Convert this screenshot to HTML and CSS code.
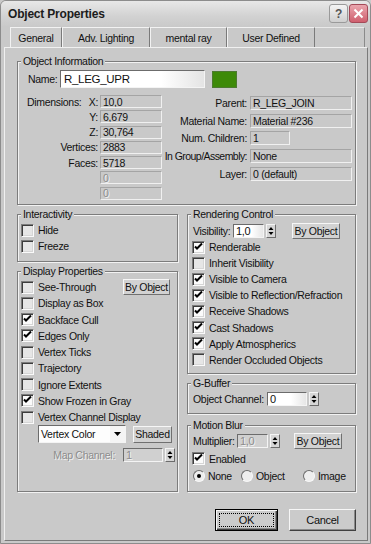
FILE: index.html
```html
<!DOCTYPE html>
<html lang="en">

<head>
    <meta charset="UTF-8">
    <meta name="viewport" content="width=device-width, initial-scale=1.0">
    <title>Object Properties</title>
    <link rel="stylesheet" href="styles.css">
</head>

<body>
    <div class="dialog">
        <div class="titlebar">
            <span class="title">Object Properties</span>
            <div class="title-buttons">
                <span class="tb-btn tb-help">?</span>
                <span class="tb-btn tb-close">
                    <svg width="11" height="11" viewBox="0 0 11 11"><path d="M1.5 1.5L9.5 9.5M9.5 1.5L1.5 9.5" stroke="#fff" stroke-width="2"/></svg>
                </span>
            </div>
        </div>

        <div class="tabs">
            <div class="tab active tab-general">General</div>
            <div class="tab tab-adv">Adv. Lighting</div>
            <div class="tab tab-mr">mental ray</div>
            <div class="tab tab-user">User Defined</div>
            <div class="tab-fill"></div>
        </div>

        <div class="page">
            <fieldset class="group obj-info">
                <legend>Object Information</legend>
                <div class="name-row">
                    <span class="name-label">Name:</span>
                    <div class="name-input">R_LEG_UPR</div>
                    <div class="swatch"></div>
                </div>
                <div class="info">
                    <div class="info-left">
                        <span class="lbl lbl-dim"><span>Dimensions:</span><span>X:</span></span><span class="field">10,0</span>
                        <span class="lbl">Y:</span><span class="field">6,679</span>
                        <span class="lbl">Z:</span><span class="field">30,764</span>
                        <span class="lbl">Vertices:</span><span class="field">2883</span>
                        <span class="lbl">Faces:</span><span class="field">5718</span>
                        <span class="lbl"></span><span class="field off">0</span>
                        <span class="lbl"></span><span class="field off">0</span>
                    </div>
                    <div class="info-right">
                        <span class="lbl">Parent:</span><span class="field">R_LEG_JOIN</span>
                        <span class="lbl">Material Name:</span><span class="field">Material #236</span>
                        <span class="lbl">Num. Children:</span><span class="field short">1</span>
                        <span class="lbl lbl-tight">In Group/Assembly:</span><span class="field">None</span>
                        <span class="lbl">Layer:</span><span class="field">0 (default)</span>
                    </div>
                </div>
            </fieldset>

            <div class="columns">
                <div class="col col-left">
                    <fieldset class="group interactivity">
                        <legend>Interactivity</legend>
                        <div class="check"><span class="box"></span>Hide</div>
                        <div class="check"><span class="box"></span>Freeze</div>
                    </fieldset>

                    <fieldset class="group display">
                        <legend>Display Properties</legend>
                        <div class="check"><span class="box"></span>See-Through<span class="btn small by-object-left">By Object</span></div>
                        <div class="check"><span class="box"></span>Display as Box</div>
                        <div class="check"><span class="box on"><svg width="11" height="11" viewBox="0 0 11 11"><path d="M2 4.5l2 2 5-5" fill="none" stroke="#000" stroke-width="2"/></svg></span>Backface Cull</div>
                        <div class="check"><span class="box on"><svg width="11" height="11" viewBox="0 0 11 11"><path d="M2 4.5l2 2 5-5" fill="none" stroke="#000" stroke-width="2"/></svg></span>Edges Only</div>
                        <div class="check"><span class="box"></span>Vertex Ticks</div>
                        <div class="check"><span class="box"></span>Trajectory</div>
                        <div class="check"><span class="box"></span>Ignore Extents</div>
                        <div class="check"><span class="box on"><svg width="11" height="11" viewBox="0 0 11 11"><path d="M2 4.5l2 2 5-5" fill="none" stroke="#000" stroke-width="2"/></svg></span>Show Frozen in Gray</div>
                        <div class="check"><span class="box"></span>Vertex Channel Display</div>
                        <div class="vc-row">
                            <div class="dropdown">
                                <span class="dd-text">Vertex Color</span>
                                <span class="dd-arrow"><svg width="7" height="4" viewBox="0 0 7 4"><path d="M0 0H7L3.5 4Z" fill="#000"/></svg></span>
                            </div>
                            <span class="btn small shaded">Shaded</span>
                        </div>
                        <div class="map-row">
                            <span class="map-label">Map Channel:</span>
                            <span class="spinner">
                                <span class="spin-field off map-field">1</span>
                                <span class="spin-arrows"><svg width="8" height="12" viewBox="0 0 8 12"><path d="M4 2L6.5 5H1.5Z M4 10L1.5 7H6.5Z" fill="#000"/></svg></span>
                            </span>
                        </div>
                    </fieldset>
                </div>

                <div class="col col-right">
                    <fieldset class="group rendering">
                        <legend>Rendering Control</legend>
                        <div class="row vis-row">
                            <span class="row-label vis-label">Visibility:</span>
                            <span class="spinner">
                                <span class="spin-field vis-field">1,0</span>
                                <span class="spin-arrows"><svg width="8" height="12" viewBox="0 0 8 12"><path d="M4 2L6.5 5H1.5Z M4 10L1.5 7H6.5Z" fill="#000"/></svg></span>
                            </span>
                            <span class="btn small by-object">By Object</span>
                        </div>
                        <div class="check"><span class="box on"><svg width="11" height="11" viewBox="0 0 11 11"><path d="M2 4.5l2 2 5-5" fill="none" stroke="#000" stroke-width="2"/></svg></span>Renderable</div>
                        <div class="check"><span class="box"></span>Inherit Visibility</div>
                        <div class="check"><span class="box on"><svg width="11" height="11" viewBox="0 0 11 11"><path d="M2 4.5l2 2 5-5" fill="none" stroke="#000" stroke-width="2"/></svg></span>Visible to Camera</div>
                        <div class="check"><span class="box on"><svg width="11" height="11" viewBox="0 0 11 11"><path d="M2 4.5l2 2 5-5" fill="none" stroke="#000" stroke-width="2"/></svg></span>Visible to Reflection/Refraction</div>
                        <div class="check"><span class="box on"><svg width="11" height="11" viewBox="0 0 11 11"><path d="M2 4.5l2 2 5-5" fill="none" stroke="#000" stroke-width="2"/></svg></span>Receive Shadows</div>
                        <div class="check"><span class="box on"><svg width="11" height="11" viewBox="0 0 11 11"><path d="M2 4.5l2 2 5-5" fill="none" stroke="#000" stroke-width="2"/></svg></span>Cast Shadows</div>
                        <div class="check"><span class="box on"><svg width="11" height="11" viewBox="0 0 11 11"><path d="M2 4.5l2 2 5-5" fill="none" stroke="#000" stroke-width="2"/></svg></span>Apply Atmospherics</div>
                        <div class="check"><span class="box"></span>Render Occluded Objects</div>
                    </fieldset>

                    <fieldset class="group gbuffer">
                        <legend>G-Buffer</legend>
                        <div class="row">
                            <span class="row-label channel-label">Object Channel:</span>
                            <span class="spinner">
                                <span class="spin-field channel-field">0</span>
                                <span class="spin-arrows"><svg width="8" height="12" viewBox="0 0 8 12"><path d="M4 2L6.5 5H1.5Z M4 10L1.5 7H6.5Z" fill="#000"/></svg></span>
                            </span>
                        </div>
                    </fieldset>

                    <fieldset class="group motion">
                        <legend>Motion Blur</legend>
                        <div class="row">
                            <span class="row-label mult-label">Multiplier:</span>
                            <span class="spinner">
                                <span class="spin-field off vis-field">1,0</span>
                                <span class="spin-arrows"><svg width="8" height="12" viewBox="0 0 8 12"><path d="M4 2L6.5 5H1.5Z M4 10L1.5 7H6.5Z" fill="#000"/></svg></span>
                            </span>
                            <span class="btn small by-object mb-by-object">By Object</span>
                        </div>
                        <div class="check tall"><span class="box on"><svg width="11" height="11" viewBox="0 0 11 11"><path d="M2 4.5l2 2 5-5" fill="none" stroke="#000" stroke-width="2"/></svg></span>Enabled</div>
                        <div class="radios">
                            <span class="radio-item r-none"><span class="radio on"></span>None</span>
                            <span class="radio-item r-object"><span class="radio"></span>Object</span>
                            <span class="radio-item"><span class="radio"></span>Image</span>
                        </div>
                    </fieldset>
                </div>
            </div>

            <div class="actions">
                <span class="btn big default"><span class="focus">OK</span></span>
                <span class="btn big cancel">Cancel</span>
            </div>
        </div>
    </div>
</body>

</html>
```

FILE: styles.css
```css
body {
    margin: 0;
    padding: 0;
    font-family: "Liberation Sans", Arial, sans-serif;
    font-size: 10.5px;
    letter-spacing: -0.3px;
    color: #111;
    background-color: #c9c9c9;
}

.dialog {
    width: 371px;
    height: 544px;
    box-sizing: border-box;
    border: 1px solid #8c8c8c;
    border-radius: 6px 6px 0 0;
    background-color: #c9c9c9;
    padding: 0 2px 2px 3px;
    display: flex;
    flex-direction: column;
}

/* title bar */
.titlebar {
    height: 25px;
    margin: 0 -2px 0 -3px;
    padding: 0 2px 0 7px;
    display: flex;
    align-items: center;
    justify-content: space-between;
    background: linear-gradient(#e8e8e8, #d2d2d2 60%, #cacaca);
    border-radius: 5px 5px 0 0;
}

.title {
    font-size: 12px;
    font-weight: bold;
    letter-spacing: -0.2px;
    color: #1c1c1c;
}

.title-buttons {
    display: flex;
    gap: 1px;
}

.tb-btn {
    width: 19px;
    height: 19px;
    box-sizing: border-box;
    display: flex;
    align-items: center;
    justify-content: center;
    border-radius: 3px;
}

.tb-help {
    border: 1px solid #9a9a9a;
    background: linear-gradient(#f4f4f4, #cfcfcf);
    font-size: 12px;
    font-weight: bold;
    color: #555;
}

.tb-close {
    border: 1px solid #a44a58;
    background: linear-gradient(#eaa6ae, #cf5f6e);
}

/* tabs */
.tabs {
    display: flex;
    height: 20px;
    margin-top: 1px;
    margin-left: 6px;
}

.tab {
    box-sizing: border-box;
    height: 20px;
    display: flex;
    align-items: center;
    justify-content: center;
    border-top: 1px solid #f2f2f2;
    border-left: 1px solid #f2f2f2;
    border-right: 1px solid #7a7a7a;
}

.tab.active {
    background-color: #cdcdcd;
}

.tab-general { width: 52px; }
.tab-adv { width: 88px; }
.tab-mr { width: 77px; }
.tab-user { width: 88px; }

.tab-fill {
    flex: 1;
    border-top: 1px solid #e8e8e8;
    border-right: 1px solid #8a8a8a;
    margin-right: 3px;
}

/* tab page */
.page {
    flex: 1;
    box-sizing: border-box;
    border: 1px solid;
    border-color: #f0f0f0 #7a7a7a #7a7a7a #f0f0f0;
    padding: 7px 11px 0 12px;
}

.group {
    margin: 0;
    padding: 0;
    min-width: 0;
    box-sizing: border-box;
    border: 1px solid #7c7c7c;
    box-shadow: 1px 1px 0 #f2f2f2, inset 1px 1px 0 #f2f2f2;
}

.group legend {
    margin-left: 3px;
    padding: 0 2px;
    line-height: 12px;
    background-color: #c9c9c9;
}

/* object information */
.obj-info {
    height: 150px;
}

.name-row {
    display: flex;
    align-items: center;
    margin-top: 3px;
    padding-left: 10px;
}

.name-label {
    width: 32px;
}

.name-input {
    width: 145px;
    height: 18px;
    box-sizing: border-box;
    border: 1px solid;
    border-color: #6c6c6c #f4f4f4 #f4f4f4 #6c6c6c;
    background: linear-gradient(90deg, #ffffff 70%, #e4e4e4);
    padding-left: 3px;
    font-size: 11.5px;
    line-height: 16px;
}

.swatch {
    width: 25px;
    height: 17px;
    margin-left: 7px;
    background-color: #3d8a08;
    border: 1px solid #4c7a30;
    box-sizing: border-box;
}

.info {
    display: flex;
    margin-top: 7px;
    padding-left: 9px;
}

.info-left {
    display: grid;
    grid-template-columns: 71px 62px;
    column-gap: 2px;
    grid-auto-rows: 13px;
    row-gap: 2.3px;
}

.info-right {
    display: grid;
    grid-template-columns: 85px 102px;
    column-gap: 3px;
    grid-auto-rows: 14px;
    row-gap: 3.7px;
    margin-top: 1px;
}

.lbl {
    display: flex;
    align-items: center;
    justify-content: flex-end;
    white-space: nowrap;
}

.lbl-dim {
    justify-content: space-between;
}

.lbl-tight {
    letter-spacing: -0.55px;
}

.field {
    display: flex;
    align-items: center;
    box-sizing: border-box;
    padding-left: 2px;
    border: 1px solid;
    border-color: #a4a4a4 #f0f0f0 #f0f0f0 #a4a4a4;
    white-space: nowrap;
    overflow: hidden;
}

.field.short {
    width: 40px;
}

.off {
    color: #8c8c8c;
    text-shadow: 1px 1px 0 #f2f2f2;
}

/* two columns */
.columns {
    display: flex;
    gap: 9px;
    margin-top: 3px;
}

.col {
    display: flex;
    flex-direction: column;
}

.col-left { width: 161px; }
.col-right { width: 169px; }

.interactivity {
    height: 54px;
    padding-top: 2px;
}

.display {
    height: 227px;
    margin-top: 3px;
    padding-top: 2px;
}

.rendering {
    height: 166px;
    padding-top: 3px;
}

.gbuffer {
    height: 37px;
    margin-top: 3px;
    padding-top: 2px;
}

.motion {
    height: 73px;
    margin-top: 5px;
    padding-top: 2px;
}

/* checkboxes */
.check {
    display: flex;
    align-items: center;
    height: 16.25px;
    padding-left: 3px;
    white-space: nowrap;
}

.col-right .check {
    height: 16.1px;
    padding-left: 4px;
}

.col-right .check.tall {
    height: 17px;
    margin-top: 1px;
}

.box {
    width: 13px;
    height: 13px;
    box-sizing: border-box;
    flex: none;
    border: 1px solid;
    border-color: #7c7c7c #fafafa #fafafa #7c7c7c;
    box-shadow: inset 1px 1px 0 #3c3c3c, inset -1px -1px 0 #d6d6d6;
    background-color: #e6e6e6;
    margin-right: 4px;
    display: flex;
}

.box.on {
    background-color: #fbfbfb;
}

.box svg {
    display: block;
}

/* buttons */
.btn {
    display: flex;
    align-items: center;
    justify-content: center;
    box-sizing: border-box;
    border: 1px solid;
    border-color: #f6f6f6 #404040 #404040 #f6f6f6;
    box-shadow: inset -1px -1px 0 #8a8a8a;
    background-color: #cbcbcb;
    white-space: nowrap;
}

.btn.small {
    height: 16px;
    border-color: #f6f6f6 #707070 #707070 #f6f6f6;
    box-shadow: none;
    background-color: #d2d2d2;
}

.by-object-left {
    width: 47px;
    margin-left: auto;
    margin-right: 7px;
}

.by-object {
    width: 48px;
    margin-left: 16px;
}

.mb-by-object {
    margin-left: 14px;
}

/* vertex color row */
.vc-row {
    display: flex;
    align-items: center;
    padding-left: 20px;
    height: 18px;
}

.dropdown {
    width: 88px;
    height: 18px;
    box-sizing: border-box;
    display: flex;
    border: 1px solid;
    border-color: #6c6c6c #f4f4f4 #f4f4f4 #6c6c6c;
    background-color: #fdfdfd;
}

.dd-text {
    flex: 1;
    padding-left: 2px;
    display: flex;
    align-items: center;
}

.dd-arrow {
    width: 15px;
    display: flex;
    align-items: center;
    justify-content: center;
    background-color: #f4f4f4;
}

.shaded {
    width: 39px;
    margin-left: 7px;
}

.btn.small.shaded {
    height: 17px;
}

.map-row {
    display: flex;
    align-items: center;
    justify-content: flex-end;
    margin-top: 5px;
    padding-right: 2px;
    height: 13px;
}

.map-label {
    color: #8c8c8c;
    text-shadow: 1px 1px 0 #f2f2f2;
    margin-right: 8px;
}

/* spinners */
.row {
    display: flex;
    align-items: center;
    height: 16px;
    padding-left: 5px;
    white-space: nowrap;
}

.row-label {
    flex: none;
}

.vis-label { width: 40px; }
.channel-label { width: 74px; }
.mult-label { width: 44px; }

.spinner {
    display: flex;
    align-items: center;
    gap: 2px;
}

.spin-field {
    height: 14px;
    box-sizing: border-box;
    display: flex;
    align-items: center;
    padding-left: 2px;
    border: 1px solid;
    border-color: #6c6c6c #f4f4f4 #f4f4f4 #6c6c6c;
    background: linear-gradient(90deg, #ffffff 60%, #e6e6e6);
    font-size: 11px;
}

.spin-field.off {
    background: #d0d0d0;
}

.vis-field { width: 31px; }
.channel-field { width: 40px; }
.map-field { width: 40px; }

.spin-arrows {
    width: 10px;
    height: 14px;
    box-sizing: border-box;
    display: flex;
    align-items: center;
    justify-content: center;
    border: 1px solid;
    border-color: #f4f4f4 #6c6c6c #6c6c6c #f4f4f4;
    background-color: #d6d6d6;
}

/* radios */
.radios {
    display: flex;
    align-items: center;
    height: 17px;
    padding-left: 5px;
}

.radio-item {
    display: flex;
    align-items: center;
}

.r-none { width: 48px; }
.r-object { width: 62px; }

.radio {
    width: 12px;
    height: 12px;
    box-sizing: border-box;
    border-radius: 50%;
    border: 1px solid;
    border-color: #6c6c6c #f8f8f8 #f8f8f8 #6c6c6c;
    background-color: #eeeeee;
    margin-right: 3px;
    display: flex;
    align-items: center;
    justify-content: center;
}

.radio.on::after {
    content: "";
    width: 4px;
    height: 4px;
    border-radius: 50%;
    background-color: #000;
}

/* ok / cancel */
.actions {
    display: flex;
    justify-content: flex-end;
    gap: 11px;
    margin-top: 17px;
}

.btn.big {
    height: 22px;
    font-size: 11px;
}

.default {
    width: 63px;
    border: 1px solid #000;
    box-shadow: inset 1px 1px 0 #f6f6f6, inset -1px -1px 0 #404040, inset -2px -2px 0 #8a8a8a;
    padding: 3px;
}

.focus {
    flex: 1;
    align-self: stretch;
    display: flex;
    align-items: center;
    justify-content: center;
    border: 1px dotted #000;
}

.cancel {
    width: 67px;
}
```
